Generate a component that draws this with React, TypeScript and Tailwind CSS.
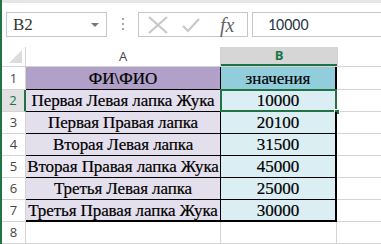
import React from 'react';

const rows: [string, string][] = [
  ['Первая Левая лапка Жука', '10000'],
  ['Первая Правая лапка', '20100'],
  ['Вторая Левая лапка', '31500'],
  ['Вторая Правая лапка Жука', '45000'],
  ['Третья Левая лапка', '25000'],
  ['Третья Правая лапка Жука', '30000'],
];

const serif = { fontFamily: '"Liberation Serif", "Times New Roman", serif' };

const App: React.FC = () => {
  return (
    <div
      className="w-[381px] h-[244px] overflow-hidden bg-white border-l-2 border-[#217346] flex flex-col"
      style={{ fontFamily: '"Open Sans", "Liberation Sans", sans-serif' }}
    >
      {/* formula bar */}
      <div className="h-[48px] flex items-start pt-[12px] pl-[4px] border-t-[3px] border-[#e6e6e6]">
        <div className="w-[101px] h-[25px] border border-[#c6c6c6] flex items-center justify-between pl-[6px] pr-[7px] -mt-[3px]">
          <span className="text-[17px] text-[#333]" style={serif}>B2</span>
          <span className="w-0 h-0 border-l-[4px] border-r-[4px] border-t-[4px] border-l-transparent border-r-transparent border-t-[#777]" />
        </div>
        <div className="w-[31px] flex flex-col items-center gap-[3px] pt-[6px] -mt-[3px]">
          <span className="w-[2px] h-[2px] bg-[#a6a6a6]" />
          <span className="w-[2px] h-[2px] bg-[#a6a6a6]" />
          <span className="w-[2px] h-[2px] bg-[#a6a6a6]" />
        </div>
        <div className="w-[110px] h-[25px] border border-[#c6c6c6] flex items-center -mt-[3px]">
          <svg width="22" height="18" viewBox="0 0 22 18" className="ml-[8px]">
            <path d="M2 1 L20 17 M20 1 L2 17" stroke="#c8c8c8" strokeWidth="2.2" />
          </svg>
          <svg width="20" height="16" viewBox="0 0 20 16" className="ml-[12px]">
            <path d="M2 9 L7 14 L18 2" stroke="#c8c8c8" strokeWidth="2.2" fill="none" />
          </svg>
          <span className="ml-[19px] text-[20px] italic text-[#666]" style={serif}>fx</span>
        </div>
        <div className="ml-[4px] flex-1 h-[25px] border border-r-0 border-[#c6c6c6] flex items-center pl-[15px] -mt-[3px]">
          <span className="text-[16px] text-[#2a3545]" style={{ fontFamily: 'Carlito, "Liberation Sans", sans-serif' }}>10000</span>
        </div>
      </div>

      {/* column headers */}
      <div className="flex h-[20px] border-b border-[#d4d4d4]">
        <div className="w-[24px] relative border-r border-[#d4d4d4]">
          <svg width="13" height="13" className="absolute right-[3px] bottom-[3px]">
            <polygon points="13,0 13,13 0,13" fill="#dcdcdc" />
          </svg>
        </div>
        <div className="w-[195px] border-r border-[#d4d4d4] flex items-center justify-center text-[13px] text-[#444]">A</div>
        <div className="w-[116px] bg-[#d6d6d6] border-b-2 border-[#217346] flex items-center justify-center text-[13px] font-bold text-[#217346]">B</div>
        <div className="flex-1 border-l border-[#d4d4d4]" />
      </div>

      {/* header row 1 */}
      <div className="flex h-[23px]">
        <div className="w-[24px] border-r border-b border-[#d4d4d4] flex items-center justify-center text-[13px] text-[#444]">1</div>
        <div className="w-[195px] bg-[#b1a0c7] border-r border-b border-black flex items-center justify-center text-[17px] text-black [-webkit-text-stroke:0.2px_black]" style={serif}>ФИ\ФИО</div>
        <div className="w-[116px] bg-[#92cddc] border-r-2 border-b border-black flex items-center justify-center text-[17px] text-black [-webkit-text-stroke:0.2px_black]" style={serif}>значения</div>
        <div className="flex-1 border-b border-[#d4d4d4]" />
      </div>

      {rows.map(([name, val], i) => {
        const n = i + 2;
        const sel = n === 2;
        const last = i === rows.length - 1;
        return (
          <div key={n} className="flex h-[22px]">
            <div
              className={
                sel
                  ? 'w-[24px] bg-[#e1e1e1] border-r-2 border-b border-r-[#217346] border-b-[#d4d4d4] flex items-center justify-center text-[13px] text-[#217346]'
                  : 'w-[24px] border-r border-b border-[#d4d4d4] flex items-center justify-center text-[13px] text-[#444]'
              }
            >
              {n}
            </div>
            <div
              className={
                last
                  ? 'w-[195px] bg-[#e4dfec] border-r border-b-2 border-black flex items-center justify-center text-[17px] tracking-[-0.1px] text-black whitespace-nowrap [-webkit-text-stroke:0.2px_black]'
                  : 'w-[195px] bg-[#e4dfec] border-r border-b border-black flex items-center justify-center text-[17px] tracking-[-0.1px] text-black whitespace-nowrap [-webkit-text-stroke:0.2px_black]'
              }
              style={serif}
            >
              {name}
            </div>
            <div
              className={
                last
                  ? 'w-[116px] bg-[#daeef3] border-r-2 border-b-2 border-black flex items-center justify-center text-[17px] text-black relative [-webkit-text-stroke:0.2px_black]'
                  : 'w-[116px] bg-[#daeef3] border-r-2 border-b border-black flex items-center justify-center text-[17px] text-black relative [-webkit-text-stroke:0.2px_black]'
              }
              style={serif}
            >
              {val}
              {sel && (
                <>
                  <span className="absolute -left-[1px] -top-[1px] -right-[2px] -bottom-[1px] border-2 border-[#217346]" />
                  <span className="absolute -right-[5px] -bottom-[4px] w-[6px] h-[6px] bg-[#217346] border border-white" />
                </>
              )}
            </div>
            <div className="flex-1 border-b border-[#d4d4d4]" />
          </div>
        );
      })}

      {/* row 8 */}
      <div className="flex h-[22px]">
        <div className="w-[24px] border-r border-b border-[#d4d4d4] flex items-center justify-center text-[13px] text-[#444]">8</div>
        <div className="w-[195px] border-r border-b border-[#d4d4d4]" />
        <div className="w-[116px] border-r border-b border-[#d4d4d4]" />
        <div className="flex-1 border-b border-[#d4d4d4]" />
      </div>
    </div>
  );
};

export default App;
